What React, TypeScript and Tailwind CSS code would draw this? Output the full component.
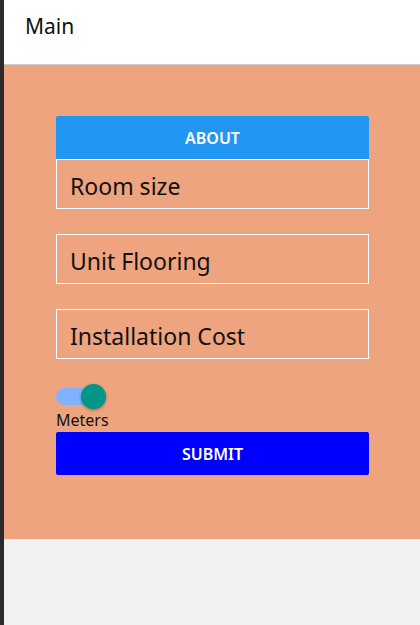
import React, { useState } from 'react';

const font = { fontFamily: '"Segoe UI", "Noto Sans", "Open Sans", sans-serif' };

const Field: React.FC<{ label: string }> = ({ label }) => (
  <div className="h-[50px] border border-white flex items-center pt-[4px] px-[13px]">
    <span className="text-[23px] leading-none text-[#111]">{label}</span>
  </div>
);

export default function App() {
  const [meters, setMeters] = useState(true);

  return (
    <div className="flex h-[625px] w-[420px] overflow-hidden" style={font}>
      <div className="w-[4px] bg-[#2b2b2b]" />
      <div className="flex-1 flex flex-col bg-[#f2f2f2]">
        <header className="h-[65px] bg-white border-b border-[#cfcfcf] pt-[14px] pl-[21px]">
          <h1 className="text-[21px] text-[#111] leading-[24px]">Main</h1>
        </header>
        <main className="bg-[#eea47f] h-[474px] pt-[51px] pl-[52px] pr-[51px]">
          <button className="w-full h-[43px] bg-[#2196f3] rounded-t-[2px] text-white text-[16px] font-semibold uppercase">
            About
          </button>
          <Field label="Room size" />
          <div className="h-[25px]" />
          <Field label="Unit Flooring" />
          <div className="h-[25px]" />
          <Field label="Installation Cost" />
          <div className="pt-[25px]">
            <button
              onClick={() => setMeters(!meters)}
              className="relative block w-[50px] h-[25px]"
              aria-label="Meters"
            >
              <span className="absolute left-0 top-[4px] w-[44px] h-[17px] rounded-full bg-[#82b1ff]" />
              <span className="absolute left-[25px] top-0 w-[25px] h-[25px] rounded-full bg-[#009688] shadow-[0_1px_3px_rgba(0,0,0,0.4)]" />
            </button>
            <div className="text-[16px] leading-[23px] text-[#111]">Meters</div>
          </div>
          <button className="w-full h-[43px] bg-[#0000ff] rounded-[2px] text-white text-[16px] font-semibold uppercase">
            Submit
          </button>
        </main>
      </div>
    </div>
  );
}
